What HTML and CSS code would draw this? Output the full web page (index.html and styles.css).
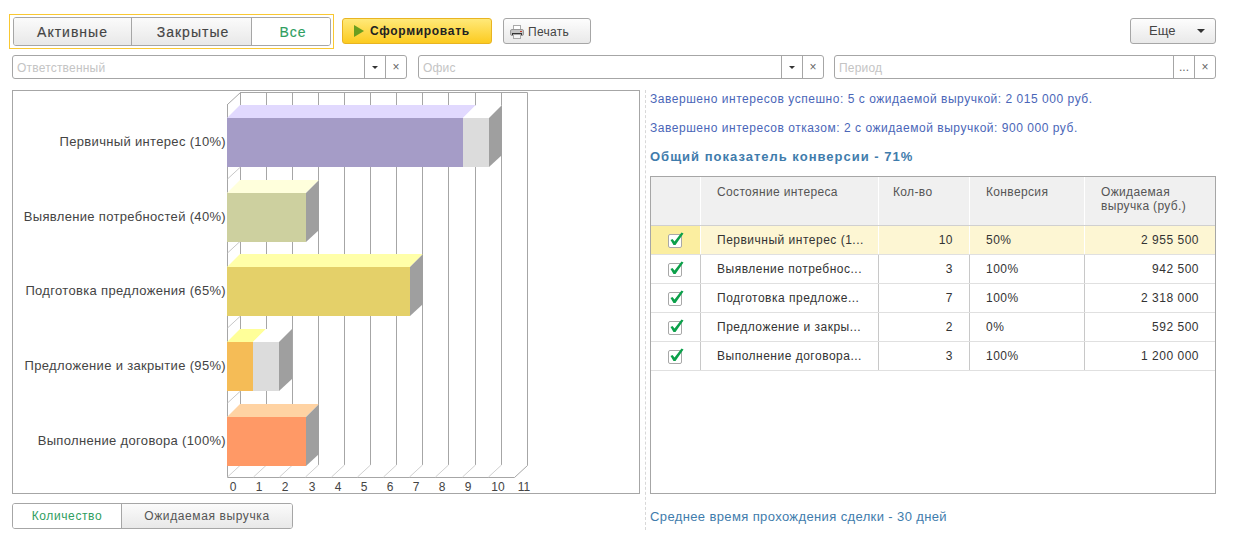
FILE: index.html
```html
<!DOCTYPE html>
<html lang="ru">
<head>
  <meta charset="UTF-8">
  <title>Воронка продаж</title>
  <link rel="stylesheet" href="styles.css">
</head>
<body>

<div class="toolbar">
  <div class="tumbler-frame">
    <div class="tumbler tumbler-big">
      <span class="tumbler-item w-active">Активные</span>
      <span class="tumbler-item w-closed">Закрытые</span>
      <span class="tumbler-item w-all on">Все</span>
    </div>
  </div>
  <button class="btn btn-main">
    <svg width="10" height="12" viewBox="0 0 10 12"><path d="M0 0L10 6L0 12Z" fill="#6a9e1f"/></svg>
    Сформировать
  </button>
  <button class="btn btn-print">
    <svg width="16" height="16" viewBox="0 0 16 16">
      <rect x="4.500" y="1.500" width="7" height="4" fill="#fff" stroke="#aaa"/>
      <rect x="1.500" y="5.500" width="13" height="6" rx="1.500" fill="#c4c4c4" stroke="#999"/>
      <rect x="3" y="9" width="10" height="2" fill="#333"/>
      <rect x="4.500" y="10.500" width="7" height="4" fill="#f4f4f4" stroke="#aaa"/>
      <rect x="11" y="7" width="2" height="1" fill="#c0392b"/>
    </svg>
    Печать
  </button>
  <button class="btn btn-more">Еще <i class="arrow"></i></button>
</div>

<div class="filters">
  <div class="field f-resp">
    <span class="field-text">Ответственный</span>
    <span class="field-btn"><i class="arrow small"></i></span>
    <span class="field-btn">×</span>
  </div>
  <div class="field f-office">
    <span class="field-text">Офис</span>
    <span class="field-btn"><i class="arrow small"></i></span>
    <span class="field-btn">×</span>
  </div>
  <div class="field f-period">
    <span class="field-text">Период</span>
    <span class="field-btn">...</span>
    <span class="field-btn">×</span>
  </div>
</div>

<div class="main">
  <div class="left">
    <div class="chart">
      <svg class="chart-svg" width="626" height="402" viewBox="13 91 626 402">
        <g stroke="#a6a6a6" fill="none">
          <path d="M240.500 92.500H527.500V465.500"/>
          <path d="M240.500 92V465M266.500 92V465M292.500 92V465M318.500 92V465M344.500 92V465M370.500 92V465M396.500 92V465M422.500 92V465M448.500 92V465M475.500 92V465M501.500 92V465"/>
          <path d="M227.500 104V477.500H514.500L527.500 465.500"/>
          <path d="M227.500 104.500L240.500 92.500"/>
          <path d="M227.500 477L240.500 465M253.500 477L266.500 465M279.500 477L292.500 465M305.500 477L318.500 465M331.500 477L344.500 465M357.500 477L370.500 465M383.500 477L396.500 465M409.500 477L422.500 465M435.500 477L448.500 465M462.500 477L475.500 465M488.500 477L501.500 465" stroke="#d0d0d0"/>
          <path d="M227.500 179L240.500 167M227.500 253L240.500 241M227.500 328L240.500 316M227.500 403L240.500 391" stroke="#c8c8c8"/>
        </g>

        <!-- bars -->
        <path d="M227 118L240 105H476L463 118Z" fill="#e1d9fe"/>
        <path d="M463 118L476 105H502L489 118Z" fill="#fff"/>
        <rect x="227" y="118" width="236" height="49" fill="#a59cc7"/>
        <rect x="463" y="118" width="26" height="49" fill="#dcdcdc"/>
        <path d="M489 118L502 105V155L489 167Z" fill="#9f9f9f"/>

        <path d="M227 193L240 180H319L306 193Z" fill="#ffffdc"/>
        <rect x="227" y="193" width="79" height="49" fill="#cdd09f"/>
        <path d="M306 193L319 180V230L306 242Z" fill="#9f9f9f"/>

        <path d="M227 267L240 254H423L410 267Z" fill="#ffffa9"/>
        <rect x="227" y="267" width="183" height="49" fill="#e4d069"/>
        <path d="M410 267L423 254V304L410 316Z" fill="#9f9f9f"/>

        <path d="M227 342L240 329H266L253 342Z" fill="#ffff99"/>
        <path d="M253 342L266 329H292L279 342Z" fill="#fff"/>
        <rect x="227" y="342" width="26" height="49" fill="#f5bc56"/>
        <rect x="253" y="342" width="26" height="49" fill="#dcdcdc"/>
        <path d="M279 342L292 329V379L279 391Z" fill="#9f9f9f"/>

        <path d="M227 417L240 404H319L306 417Z" fill="#ffd3a3"/>
        <rect x="227" y="417" width="79" height="49" fill="#ff9966"/>
        <path d="M306 417L319 404V454L306 466Z" fill="#9f9f9f"/>

        <g class="chart-label" text-anchor="end">
          <text x="226" y="146">Первичный интерес (10%)</text>
          <text x="226" y="221">Выявление потребностей (40%)</text>
          <text x="226" y="295">Подготовка предложения (65%)</text>
          <text x="226" y="370">Предложение и закрытие (95%)</text>
          <text x="226" y="445">Выполнение договора (100%)</text>
        </g>
        <g class="chart-tick" text-anchor="middle">
          <text x="233" y="491">0</text>
          <text x="259" y="491">1</text>
          <text x="285" y="491">2</text>
          <text x="312" y="491">3</text>
          <text x="338" y="491">4</text>
          <text x="364" y="491">5</text>
          <text x="390" y="491">6</text>
          <text x="416" y="491">7</text>
          <text x="442" y="491">8</text>
          <text x="468" y="491">9</text>
          <text x="498" y="491">10</text>
          <text x="524" y="491">11</text>
        </g>
      </svg>
    </div>
    <div class="tumbler tumbler-small">
      <span class="tumbler-item w-qty on">Количество</span>
      <span class="tumbler-item w-rev">Ожидаемая выручка</span>
    </div>
  </div>

  <div class="right">
    <p class="info">Завершено интересов успешно: 5 с ожидаемой выручкой: 2 015 000 руб.</p>
    <p class="info">Завершено интересов отказом: 2 с ожидаемой выручкой: 900 000 руб.</p>
    <p class="info total">Общий показатель конверсии - 71%</p>

    <div class="table">
      <div class="row head">
        <div class="cell c-check"></div>
        <div class="cell c-state">Состояние интереса</div>
        <div class="cell c-qty">Кол-во</div>
        <div class="cell c-conv">Конверсия</div>
        <div class="cell c-rev">Ожидаемая<br>выручка (руб.)</div>
      </div>
      <div class="row selected">
        <div class="cell c-check"><svg class="check" viewBox="0 0 16 16"><use href="#tick"/></svg></div>
        <div class="cell c-state">Первичный интерес (1...</div>
        <div class="cell c-qty num">10</div>
        <div class="cell c-conv">50%</div>
        <div class="cell c-rev num">2 955 500</div>
      </div>
      <div class="row">
        <div class="cell c-check"><svg class="check" viewBox="0 0 16 16"><use href="#tick"/></svg></div>
        <div class="cell c-state">Выявление потребнос...</div>
        <div class="cell c-qty num">3</div>
        <div class="cell c-conv">100%</div>
        <div class="cell c-rev num">942 500</div>
      </div>
      <div class="row">
        <div class="cell c-check"><svg class="check" viewBox="0 0 16 16"><use href="#tick"/></svg></div>
        <div class="cell c-state">Подготовка предложе...</div>
        <div class="cell c-qty num">7</div>
        <div class="cell c-conv">100%</div>
        <div class="cell c-rev num">2 318 000</div>
      </div>
      <div class="row">
        <div class="cell c-check"><svg class="check" viewBox="0 0 16 16"><use href="#tick"/></svg></div>
        <div class="cell c-state">Предложение и закры...</div>
        <div class="cell c-qty num">2</div>
        <div class="cell c-conv">0%</div>
        <div class="cell c-rev num">592 500</div>
      </div>
      <div class="row">
        <div class="cell c-check"><svg class="check" viewBox="0 0 16 16"><use href="#tick"/></svg></div>
        <div class="cell c-state">Выполнение договора...</div>
        <div class="cell c-qty num">3</div>
        <div class="cell c-conv">100%</div>
        <div class="cell c-rev num">1 200 000</div>
      </div>
    </div>

    <p class="info footer-note">Среднее время прохождения сделки - 30 дней</p>
  </div>
</div>

<svg class="defs" width="0" height="0">
  <symbol id="tick" viewBox="0 0 16 16">
    <rect x="0.500" y="2.500" width="13" height="13" rx="1.500" fill="#fff" stroke="#a8a8a8"/>
    <path d="M2.500 8L4.500 7L6.500 9.500L13.500 0.500L15.500 1.500L7.500 13H5.500Z" fill="#0ca04a"/>
  </symbol>
</svg>

</body>
</html>
```

FILE: styles.css
```css
* {
  box-sizing: border-box;
}
body {
  margin: 0;
  background: #fff;
  font-family: "Liberation Sans", Arial, sans-serif;
  font-size: 12px;
  color: #444;
  height: 541px;
  overflow: hidden;
}
.toolbar {
  display: flex;
  align-items: flex-start;
  height: 35px;
  margin-top: 14px;
  padding-left: 9px;
  padding-right: 17px;
}
.tumbler-frame {
  border: 1px solid #f9c832;
  padding: 2px 2px 2px 3px;
  width: 325px;
  height: 35px;
}
.tumbler {
  display: flex;
  border: 1px solid #a6a6a6;
  border-radius: 3px;
  overflow: hidden;
}
.tumbler-big {
  height: 29px;
  font-size: 14px;
  letter-spacing: 1px;
  -webkit-text-stroke: 0.15px;
}
.tumbler-small {
  height: 26px;
  width: 281px;
  margin-top: 9px;
  letter-spacing: 0.6px;
  color: #555;
}
.tumbler-item {
  display: flex;
  align-items: center;
  justify-content: center;
  background: linear-gradient(#fbfbfb, #e8e8e8);
  border-right: 1px solid #a6a6a6;
}
.tumbler-item:last-child {
  border-right: none;
}
.tumbler-item.on {
  background: #fff;
  color: #2f9e5f;
}
.w-active { width: 118px; }
.w-closed { width: 120px; padding-left: 3px; }
.w-all { flex: 1; padding-left: 4px; }
.w-qty { width: 109px; }
.w-rev { flex: 1; }
.btn {
  height: 26px;
  margin-top: 4px;
  border: 1px solid #a6a6a6;
  border-radius: 3px;
  background: linear-gradient(#fdfdfd, #e9e9e9);
  font-family: inherit;
  font-size: 12px;
  color: #444;
  padding: 0;
  display: flex;
  align-items: center;
}
.btn-main {
  width: 150px;
  margin-left: 8px;
  padding-left: 11px;
  gap: 6px;
  border-color: #e8b422;
  background: linear-gradient(#ffe979, #fccb20);
  color: #222;
  font-weight: bold;
  letter-spacing: 0.7px;
}
.btn-print {
  width: 88px;
  margin-left: 11px;
  padding-left: 5px;
  padding-top: 1px;
  gap: 3px;
  letter-spacing: 0.3px;
}
.btn-more {
  width: 86px;
  margin-left: auto;
  padding-left: 18px;
  padding-bottom: 1px;
  font-size: 13px;
}
.arrow {
  display: inline-block;
  border-left: 4px solid transparent;
  border-right: 4px solid transparent;
  border-top: 4px solid #333;
}
.btn-more .arrow {
  margin-left: 22px;
}
.arrow.small {
  border-left-width: 3px;
  border-right-width: 3px;
  border-top-width: 3px;
}
.filters {
  display: flex;
  height: 24px;
  margin-top: 6px;
  padding-left: 12px;
  color: #c4c4c4;
}
.field {
  display: flex;
  border: 1px solid #a6a6a6;
  border-radius: 3px;
  height: 24px;
}
.f-resp { width: 395px; }
.f-office { width: 406px; margin-left: 11px; }
.f-period { width: 382px; margin-left: 10px; }
.field-text {
  flex: 1;
  padding-left: 4px;
  line-height: 24px;
  letter-spacing: 0.2px;
}
.field-btn {
  width: 21px;
  border-left: 1px solid #a6a6a6;
  display: flex;
  align-items: center;
  justify-content: center;
  color: #666;
  font-size: 12px;
}
.main {
  display: flex;
  margin-top: 11px;
  padding-left: 12px;
}
.left {
  width: 628px;
}
.chart {
  width: 628px;
  height: 404px;
  border: 1px solid #a6a6a6;
}
.chart-svg {
  display: block;
}
.chart-label {
  font-size: 13px;
  letter-spacing: 0.33px;
  fill: #444;
}
.chart-tick {
  font-size: 12px;
  fill: #444;
}
.right {
  width: 577px;
  margin-left: 5px;
  padding-left: 4px;
  border-left: 1px dashed #d8d8d8;
  height: 440px;
}
.info {
  margin: 0;
  height: 29px;
  padding-top: 2px;
  line-height: 15px;
  color: #4a66b8;
  letter-spacing: 0.53px;
  white-space: nowrap;
}
.total {
  height: 28px;
  padding-top: 1px;
  color: #3f7cac;
  font-size: 13px;
  font-weight: bold;
  letter-spacing: 1px;
}
.table {
  width: 566px;
  height: 318px;
  border: 1px solid #a6a6a6;
}
.row {
  display: flex;
  height: 29px;
  border-bottom: 1px solid #e0e0e0;
  color: #333;
}
.row.head {
  height: 49px;
  background: #f0f0f0;
  border-bottom: 1px solid #d0d0d0;
  color: #555;
}
.cell {
  padding: 0 16px;
  line-height: 28px;
  white-space: nowrap;
  border-right: 1px solid #c8c8c8;
  letter-spacing: 0.5px;
}
.cell:last-child {
  border-right: none;
}
.head .cell {
  padding-top: 8px;
  line-height: 14px;
  letter-spacing: 0.35px;
  border-right-color: #fff;
}
.row.selected {
  background: #fdf6d3;
}
.row.selected .cell {
  border-right-color: #fff;
}
.row.selected .c-check {
  background: #fbeea0;
}
.c-check {
  width: 50px;
  padding: 0;
  display: flex;
  align-items: center;
  justify-content: center;
}
.c-state { width: 178px; }
.c-qty { width: 91px; padding-left: 14px; }
.c-conv { width: 115px; }
.c-rev { flex: 1; }
.num {
  text-align: right;
}
.c-qty.num { padding-right: 16px; }
.c-rev.num { padding-right: 16px; }
.check {
  width: 16px;
  height: 16px;
}
.footer-note {
  margin-top: 13px;
  color: #3f7cac;
  font-size: 13px;
  letter-spacing: 0.38px;
}
.defs {
  position: absolute;
}
```
